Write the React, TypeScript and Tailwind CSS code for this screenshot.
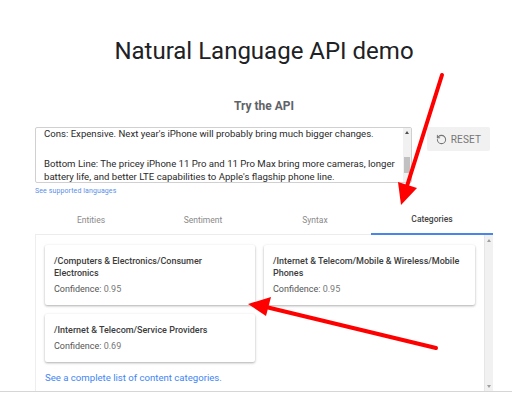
import { RotateCcw } from 'lucide-react';

const TABS = ['Entities', 'Sentiment', 'Syntax', 'Categories'];

const CATS = [
  { name: '/Computers & Electronics/Consumer Electronics', conf: '0.95' },
  { name: '/Internet & Telecom/Mobile & Wireless/Mobile Phones', conf: '0.95' },
  { name: '/Internet & Telecom/Service Providers', conf: '0.69' },
];

function Card({ name, conf }: { name: string; conf: string }) {
  return (
    <div className="bg-white rounded-[2px] shadow-[0_1px_3px_rgba(0,0,0,0.22),0_1px_2px_rgba(0,0,0,0.12)] pl-[9px] pr-[9px] pt-[9.5px] pb-[10.5px] self-start">
      <p className="text-[9px] leading-[12px] font-medium text-[#3c3c3c]">{name}</p>
      <p className="mt-[4px] text-[9px] leading-[12px] text-[#555]">
        Confidence: <span className="text-[#777]">{conf}</span>
      </p>
    </div>
  );
}

export default function App() {
  return (
    <div className="relative w-[512px] h-[397px] bg-white overflow-hidden font-['Roboto',sans-serif]">
      <h1 className="mt-[35px] text-center text-[24px] leading-[32px] text-[#202124] pl-[16px]">
        Natural Language API demo
      </h1>
      <p className="mt-[31px] text-center text-[12px] leading-[16px] font-bold text-[#5f6368] pl-[16px]">Try the API</p>

      <div className="mt-[13px] ml-[35px] flex items-start">
        <div className="relative w-[377px] h-[56px] border border-[#d0d0d0] rounded-[2px] overflow-hidden">
          <div className="pl-[8px] pr-[12px] -mt-[1px] text-[9.6px] leading-[13px] text-[#2a2a2a]">
            <p>Cons: Expensive. Next year's iPhone will probably bring much bigger changes.</p>
            <p className="mt-[17px]">Bottom Line: The pricey iPhone 11 Pro and 11 Pro Max bring more cameras, longer battery life, and better LTE capabilities to Apple's flagship phone line.</p>
          </div>
          <div className="absolute right-0 top-0 bottom-0 w-[8px] bg-[#f1f1f1]">
            <div className="mx-auto mt-[3px] w-0 h-0 border-l-[2px] border-r-[2px] border-b-[3px] border-l-transparent border-r-transparent border-b-[#505050]" />
            <div className="absolute left-[1px] right-[1px] top-[29px] h-[16px] bg-[#c1c1c1]" />
          </div>
        </div>
        <button className="ml-[15px] w-[63px] h-[24px] bg-[#f1f1f1] rounded-[2px] flex items-center justify-center gap-[4px] text-[#757575] text-[10px] tracking-[0.2px]">
          <RotateCcw size={11} strokeWidth={2.2} />
          RESET
        </button>
      </div>

      <a className="block ml-[35px] mt-[3px] text-[7px] leading-[10px] text-[#5a8fe8] tracking-[0.1px]">See supported languages</a>

      <div className="ml-[35px] w-[458px] mt-[9px] flex">
        {TABS.map(t => (
          <div
            key={t}
            className={`h-[30px] flex items-center justify-center text-[8.5px] ${
              t === 'Categories'
                ? 'w-[122px] border-b-2 border-[#4a86e8] text-[#444] font-medium'
                : 'w-[112px] border-b border-[#ececec] text-[#8a8a8a] pt-[1px]'
            }`}
          >
            {t}
          </div>
        ))}
      </div>

      <div className="relative ml-[35px] w-[458px] h-[156px] border-l border-[#eeeeee]">
        <div className="pl-[9px] pr-[18px] pt-[10px]">
          <div className="grid grid-cols-[210px_211px] gap-x-[9px] gap-y-[9px]">
            <Card {...CATS[0]} />
            <Card {...CATS[1]} />
            <Card {...CATS[2]} />
          </div>
          <a className="block mt-[9px] text-[9.6px] leading-[14px] text-[#4285f4]">See a complete list of content categories.</a>
        </div>
        <div className="absolute right-0 top-0 bottom-0 w-[9px] bg-[#f1f1f1] border-l border-[#e6e6e6]">
          <div className="mx-auto mt-[4px] w-0 h-0 border-l-[2px] border-r-[2px] border-b-[3px] border-l-transparent border-r-transparent border-b-[#a0a0a0]" />
          <div className="absolute bottom-[3px] left-[2px] w-0 h-0 border-l-[2px] border-r-[2px] border-t-[3px] border-l-transparent border-r-transparent border-t-[#a0a0a0]" />
        </div>
      </div>
      <div className="h-px bg-[#d6d6d6]" />

      <svg className="absolute inset-0 pointer-events-none" width="512" height="397" viewBox="0 0 512 397">
        <line x1="442" y1="75" x2="407" y2="186" stroke="#ff0000" strokeWidth="4" strokeLinecap="round" />
        <polygon points="398,182 417,188 401,205" fill="#ff0000" />
        <line x1="436" y1="348" x2="266" y2="307" stroke="#ff0000" strokeWidth="4" strokeLinecap="round" />
        <polygon points="248,304 271,297 266,316" fill="#ff0000" />
      </svg>
    </div>
  );
}
